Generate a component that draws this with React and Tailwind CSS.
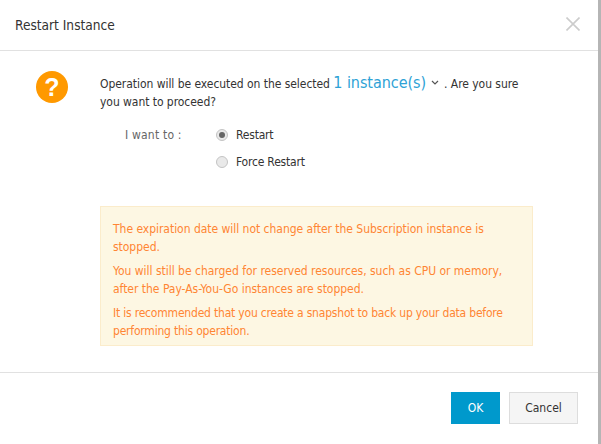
import React from "react";

function Radio({ checked, label }) {
  return (
    <label className="flex items-center h-[27px]">
      <span className="w-[12px] h-[12px] rounded-full border border-[#c4c4c4] bg-[#e9e9e9] flex items-center justify-center mr-[8px]">
        {checked && <span className="w-[6px] h-[6px] rounded-full bg-[#666666]" />}
      </span>
      <span className="text-[#333333] tracking-[-0.2px]">{label}</span>
    </label>
  );
}

export default function App() {
  return (
    <div className="w-[601px] h-[444px] flex bg-white overflow-hidden font-['DejaVu_Sans',sans-serif] [font-stretch:condensed] text-[12px]">
      <div className="w-[598px] h-full flex flex-col">
        <header className="h-[51px] shrink-0 border-b border-[#e1e1e1] flex items-center justify-between pl-[15px] pr-[20px]">
          <h1 className="text-[13.6px] text-[#333333] font-normal">Restart Instance</h1>
          <svg width="14" height="14" viewBox="0 0 14 14" className="text-[#cccccc] translate-x-[2px] mb-[3px]">
            <path d="M0.5 0.5 L13.5 13.5 M13.5 0.5 L0.5 13.5" stroke="currentColor" strokeWidth="1.6" fill="none" />
          </svg>
        </header>
        <main className="flex-1 flex pl-[36px] pt-[20px]">
          <div className="w-[32px] h-[32px] shrink-0 rounded-full bg-[#ff9900] flex items-center justify-center text-white text-[25px] font-bold [font-stretch:normal] font-['Liberation_Sans',sans-serif] leading-none">?</div>
          <div className="ml-[32px] w-[433px]">
            <p className="leading-[18px] text-[#333333] mt-[3px] tracking-[-0.05px]">
              Operation will be executed on the selected{" "}
              <span className="text-[16px] text-[#2ea2d6]">1 instance(s)</span>
              <svg width="8" height="6" viewBox="0 0 8 6" className="inline-block ml-[5px] mr-[5px] align-[2px] text-[#555555]">
                <path d="M1 1 L4 4 L7 1" stroke="currentColor" strokeWidth="1.2" fill="none" />
              </svg>
              . Are you sure you want to proceed?
            </p>
            <div className="flex mt-[10px]">
              <span className="w-[116px] pl-[25px] pt-[5px] text-[#666666] tracking-[0.2px]">I want to :</span>
              <div className="flex flex-col">
                <Radio checked label="Restart" />
                <Radio label="Force Restart" />
              </div>
            </div>
            <div className="mt-[31px] h-[140px] border border-[#fbeccb] bg-[#fdf7e3] px-[12px] pt-[13px] text-[#ff8533] leading-[18px] flex flex-col gap-[6px]">
              <p className="tracking-[-0.03px]">The expiration date will not change after the Subscription instance is stopped.</p>
              <p className="tracking-[-0.02px]">You will still be charged for reserved resources, such as CPU or memory, after the Pay-As-You-Go instances are stopped.</p>
              <p className="tracking-[-0.2px]">It is recommended that you create a snapshot to back up your data before performing this operation.</p>
            </div>
          </div>
        </main>
        <footer className="h-[72px] shrink-0 border-t border-[#e1e1e1] flex justify-end gap-[9px] pt-[19px] pr-[20px]">
          <button className="w-[49px] h-[32px] bg-[#0099cc] text-white">OK</button>
          <button className="w-[69px] h-[32px] bg-[#f5f5f5] border border-[#dddddd] text-[#333333]">Cancel</button>
        </footer>
      </div>
      <div className="w-[3px] h-full bg-[#b5b5b5]" />
    </div>
  );
}
